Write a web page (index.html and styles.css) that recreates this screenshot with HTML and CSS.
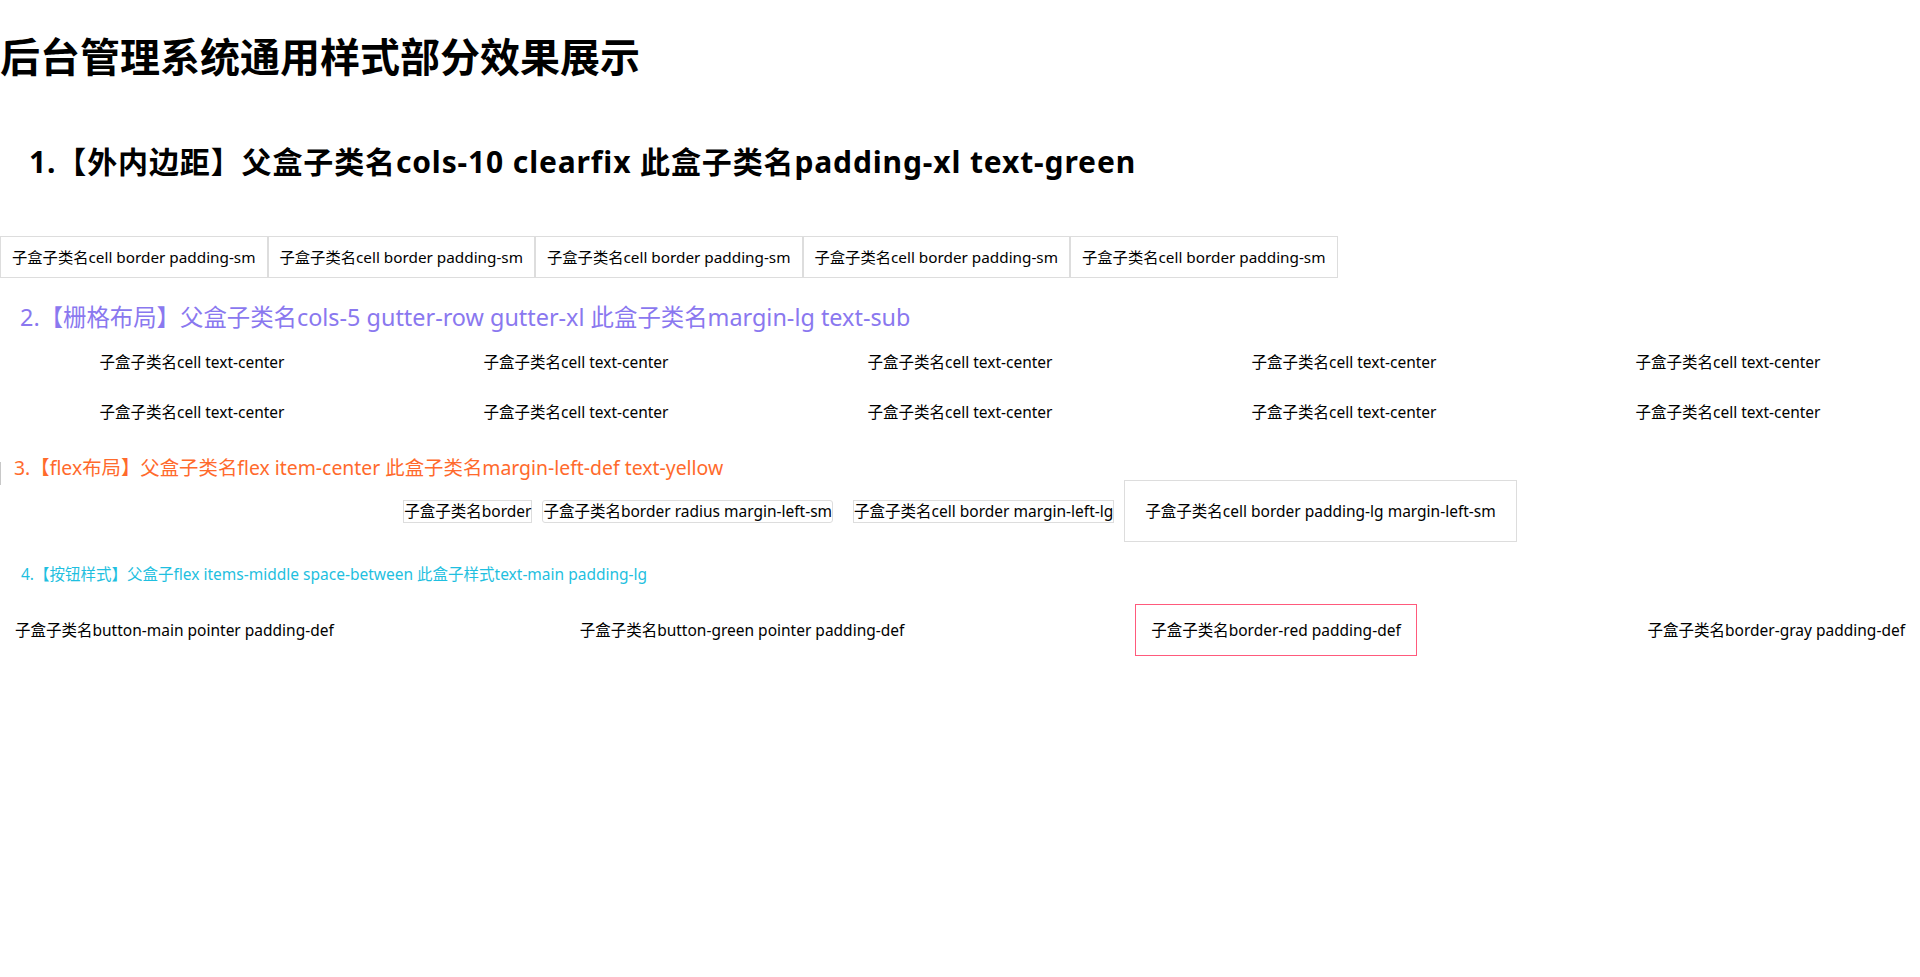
FILE: index.html
```html
<!DOCTYPE html>
<html lang="zh-CN">
<head>
<meta charset="utf-8">
<title>后台管理系统通用样式部分效果展示</title>
<link rel="stylesheet" href="styles.css">
</head>
<body>
<h1 class="page-title">后台管理系统通用样式部分效果展示</h1>

<h2 class="sec-1">1.【外内边距】父盒子类名cols-10 clearfix 此盒子类名padding-xl text-green</h2>
<div class="cols-10">
  <div class="cell-sm">子盒子类名cell border padding-sm</div>
  <div class="cell-sm">子盒子类名cell border padding-sm</div>
  <div class="cell-sm">子盒子类名cell border padding-sm</div>
  <div class="cell-sm">子盒子类名cell border padding-sm</div>
  <div class="cell-sm">子盒子类名cell border padding-sm</div>
</div>

<h3 class="sec-2">2.【栅格布局】父盒子类名cols-5 gutter-row gutter-xl 此盒子类名margin-lg text-sub</h3>
<div class="cols-5">
  <div class="grid-cell">子盒子类名cell text-center</div>
  <div class="grid-cell">子盒子类名cell text-center</div>
  <div class="grid-cell">子盒子类名cell text-center</div>
  <div class="grid-cell">子盒子类名cell text-center</div>
  <div class="grid-cell">子盒子类名cell text-center</div>
  <div class="grid-cell">子盒子类名cell text-center</div>
  <div class="grid-cell">子盒子类名cell text-center</div>
  <div class="grid-cell">子盒子类名cell text-center</div>
  <div class="grid-cell">子盒子类名cell text-center</div>
  <div class="grid-cell">子盒子类名cell text-center</div>
</div>

<h4 class="sec-3">3.【flex布局】父盒子类名flex item-center 此盒子类名margin-left-def text-yellow</h4>
<div class="flex-row">
  <div class="fx-border">子盒子类名border</div>
  <div class="fx-border fx-radius ml-sm">子盒子类名border radius margin-left-sm</div>
  <div class="fx-border ml-lg">子盒子类名cell border margin-left-lg</div>
  <div class="fx-big ml-sm">子盒子类名cell border padding-lg margin-left-sm</div>
</div>

<h5 class="sec-4">4.【按钮样式】父盒子flex items-middle space-between 此盒子样式text-main padding-lg</h5>
<div class="btn-row">
  <div class="btn">子盒子类名button-main pointer padding-def</div>
  <div class="btn">子盒子类名button-green pointer padding-def</div>
  <div class="btn btn-red">子盒子类名border-red padding-def</div>
  <div class="btn">子盒子类名border-gray padding-def</div>
</div>
</body>
</html>
```
FILE: styles.css
```css
html, body {
  margin: 0;
  padding: 0;
  background: #fff;
}
body {
  font-family: "Noto Sans", "Noto Sans CJK SC", sans-serif;
  color: #000;
  font-size: 15.5px;
}
.page-title {
  margin: 0;
  padding-top: 27px;
  font-size: 40px;
  line-height: 56px;
  font-weight: 700;
  font-family: "Noto Sans CJK SC", sans-serif;
}
.sec-1 {
  margin: 28px 0 0;
  padding: 31px 29px;
  font-size: 30px;
  line-height: 40px;
  font-weight: 700;
  letter-spacing: 0.87px;
}
.cols-10 {
  display: flex;
  margin-top: 23px;
}
.cell-sm {
  border: 1px solid #ddd;
  padding: 11px 11px;
  font-size: 15.3px;
  line-height: 18px;
}
.sec-2 {
  margin: 24px 20px 20px;
  font-size: 23.4px;
  line-height: 30px;
  font-weight: 400;
  color: #8a78ef;
}
.cols-5 {
  display: grid;
  grid-template-columns: repeat(5, 1fr);
  row-gap: 30px;
}
.grid-cell {
  text-align: center;
  line-height: 20px;
}
.sec-3 {
  margin: 40px 0 0;
  border-left: 1px solid #c8c8c8;
  padding: 0 0 11px 13px;
  font-size: 19.4px;
  line-height: 12px;
  font-weight: 400;
  color: #ff6a2c;
}
.flex-row {
  display: flex;
  justify-content: center;
  align-items: center;
  margin-top: -5px;
}
.fx-border {
  border: 1px solid #ddd;
  line-height: 21px;
}
.fx-radius {
  border-radius: 3px;
}
.ml-sm { margin-left: 10px; }
.ml-lg { margin-left: 20px; }
.fx-big {
  border: 1px solid #ddd;
  padding: 20px 20px;
  line-height: 20px;
}
.sec-4 {
  margin: 0;
  padding: 22px 21px 20px;
  font-size: 15.5px;
  line-height: 20px;
  font-weight: 400;
  color: #1fbfe0;
}
.btn-row {
  display: flex;
  justify-content: space-between;
  align-items: center;
}
.btn {
  padding: 15px;
  line-height: 20px;
}
.btn-red {
  border: 1px solid #ff5a7c;
}
```
